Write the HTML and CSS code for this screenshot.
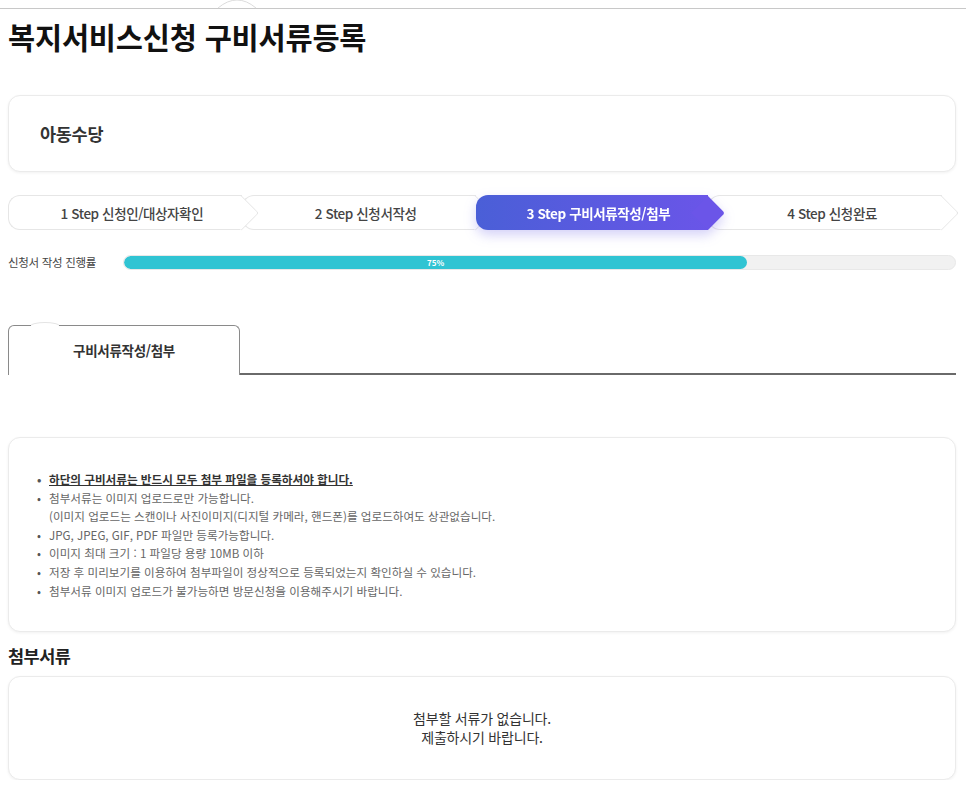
FILE: index.html
```html
<!DOCTYPE html>
<html lang="ko">
<head>
    <meta charset="UTF-8">
    <meta name="viewport" content="width=device-width, initial-scale=1.0">
    <title>복지서비스신청 구비서류등록</title>
    <link rel="stylesheet" href="styles.css">
</head>
<body>
    <div class="top-line">
        <svg class="top-notch" width="40" height="10" viewBox="0 0 40 10">
            <path d="M1 9 Q20 -7 39 9" fill="#fff" stroke="#dcdcdc" stroke-width="1"/>
        </svg>
    </div>

    <h1 class="page-title">복지서비스신청 구비서류등록</h1>

    <div class="card service-card">
        <span>아동수당</span>
    </div>

    <div class="steps">
        <div class="step">1 Step 신청인/대상자확인</div>
        <div class="step">2 Step 신청서작성</div>
        <div class="step active">3 Step 구비서류작성/첨부</div>
        <div class="step">4 Step 신청완료</div>
    </div>

    <div class="progress-row">
        <span class="progress-label">신청서 작성 진행률</span>
        <div class="progress-bar">
            <div class="progress-fill" style="width: 75%;">75%</div>
        </div>
    </div>

    <div class="tabs">
        <div class="tab">
            <span class="tab-blob"></span>
            구비서류작성/첨부
        </div>
        <div class="tab-line"></div>
    </div>

    <div class="card notice-card">
        <ul class="notice-list">
            <li class="strong">하단의 구비서류는 반드시 모두 첨부 파일을 등록하셔야 합니다.</li>
            <li>첨부서류는 이미지 업로드로만 가능합니다.<br>(이미지 업로드는 스캔이나 사진이미지(디지털 카메라, 핸드폰)를 업로드하여도 상관없습니다.</li>
            <li>JPG, JPEG, GIF, PDF 파일만 등록가능합니다.</li>
            <li>이미지 최대 크기 : 1 파일당 용량 10MB 이하</li>
            <li>저장 후 미리보기를 이용하여 첨부파일이 정상적으로 등록되었는지 확인하실 수 있습니다.</li>
            <li>첨부서류 이미지 업로드가 불가능하면 방문신청을 이용해주시기 바랍니다.</li>
        </ul>
    </div>

    <h2 class="section-title">첨부서류</h2>
    <div class="card empty-card">
        <p>첨부할 서류가 없습니다.<br>제출하시기 바랍니다.</p>
    </div>
</body>
</html>
```

FILE: styles.css
```css
body {
    font-family: "Noto Sans CJK KR", "Noto Sans", sans-serif;
    background-color: #fff;
    color: #222;
    margin: 0;
    padding: 0 10px 0 8px;
}

.top-line {
    position: relative;
    margin: 8px -10px 0 -8px;
    height: 1px;
    background-color: #c8c8c8;
}

.top-notch {
    position: absolute;
    left: 217px;
    top: -9px;
}

.page-title {
    margin: 9px 0 0;
    font-size: 29.5px;
    line-height: 36px;
    font-weight: 700;
    color: #111;
    letter-spacing: -0.2px;
}

.card {
    background-color: #fff;
    border: 1px solid #ebebeb;
    border-radius: 12px;
    box-shadow: 0 1px 3px rgba(0, 0, 0, 0.06);
    box-sizing: border-box;
}

.service-card {
    margin-top: 41px;
    height: 77px;
    display: flex;
    align-items: center;
    padding-left: 31px;
    font-size: 17.5px;
    font-weight: 700;
    color: #333;
    letter-spacing: -0.3px;
}

/* Steps */
.steps {
    display: flex;
    margin-top: 23px;
    padding-right: 14px;
}

.step {
    flex: 1;
    position: relative;
    height: 35px;
    box-sizing: border-box;
    display: flex;
    align-items: center;
    justify-content: center;
    padding-left: 13px;
    background-color: #fff;
    border: 1px solid #e6e6e6;
    border-right: none;
    border-radius: 12px 0 0 12px;
    font-size: 13.5px;
    font-weight: 500;
    color: #444;
    letter-spacing: -0.4px;
}

.step::after {
    content: "";
    position: absolute;
    right: -12px;
    top: 50%;
    width: 24px;
    height: 24px;
    background-color: #fff;
    border-top: 1px solid #e6e6e6;
    border-right: 1px solid #e6e6e6;
    transform: translateY(-50%) rotate(45deg);
    border-radius: 0 3px 0 0;
}

.step:nth-child(1) { z-index: 4; }
.step:nth-child(2) { z-index: 3; }
.step:nth-child(4) { z-index: 1; }

.step.active {
    z-index: 10;
    border: none;
    color: #fff;
    font-weight: 700;
    background: linear-gradient(90deg, #4a5fd7, #6a55e8);
    filter: drop-shadow(0 5px 6px rgba(100, 90, 230, 0.28));
}

.step.active::after {
    background-color: #6b55e8;
    border: none;
    right: -12px;
}

/* Progress */
.progress-row {
    display: flex;
    align-items: center;
    margin-top: 24px;
}

.progress-label {
    width: 115px;
    font-size: 11.5px;
    color: #444;
    letter-spacing: -0.3px;
}

.progress-bar {
    flex: 1;
    height: 15px;
    background-color: #f1f1f1;
    border: 1px solid #e8e8e8;
    border-radius: 8px;
    box-sizing: border-box;
    overflow: hidden;
}

.progress-fill {
    height: 100%;
    background-color: #30c4d3;
    border-radius: 8px;
    color: #fff;
    font-size: 8px;
    font-weight: 700;
    line-height: 13px;
    text-align: center;
}

/* Tabs */
.tabs {
    display: flex;
    align-items: flex-end;
    margin-top: 55px;
}

.tab {
    position: relative;
    width: 232px;
    height: 50px;
    box-sizing: border-box;
    border: 1.5px solid #8a8a8a;
    border-bottom: none;
    border-radius: 6px 6px 0 0;
    display: flex;
    align-items: center;
    justify-content: center;
    padding-bottom: 2px;
    font-size: 13.5px;
    font-weight: 700;
    color: #333;
    letter-spacing: -0.3px;
}

.tab-blob {
    position: absolute;
    left: 22px;
    top: -3px;
    width: 28px;
    height: 6px;
    background-color: #fff;
    border-radius: 50% 50% 0 0;
    box-shadow: 0 -1px 0 #e4e4e4;
}

.tab-line {
    flex: 1;
    height: 2px;
    background-color: #6a6a6a;
}

/* Notice */
.notice-card {
    margin-top: 62px;
    padding: 32px 20px 31px 28px;
}

.notice-list {
    list-style: none;
    margin: 0;
    padding: 0;
    font-size: 11.6px;
    line-height: 18.6px;
    color: #666;
    letter-spacing: 0;
}

.notice-list li {
    position: relative;
    padding-left: 12px;
}

.notice-list li::before {
    content: "•";
    position: absolute;
    left: 0;
    top: 0;
    color: #555;
}

.notice-list li.strong {
    color: #333;
    font-weight: 700;
    text-decoration: underline;
}

.section-title {
    margin: 14px 0 0;
    font-size: 17.5px;
    line-height: 20px;
    font-weight: 700;
    color: #222;
    letter-spacing: -0.5px;
}

.empty-card {
    margin-top: 10px;
    height: 104px;
    display: flex;
    align-items: center;
    justify-content: center;
}

.empty-card p {
    margin: 0;
    font-size: 14px;
    line-height: 19px;
    text-align: center;
    color: #333;
    letter-spacing: -0.2px;
}
```
